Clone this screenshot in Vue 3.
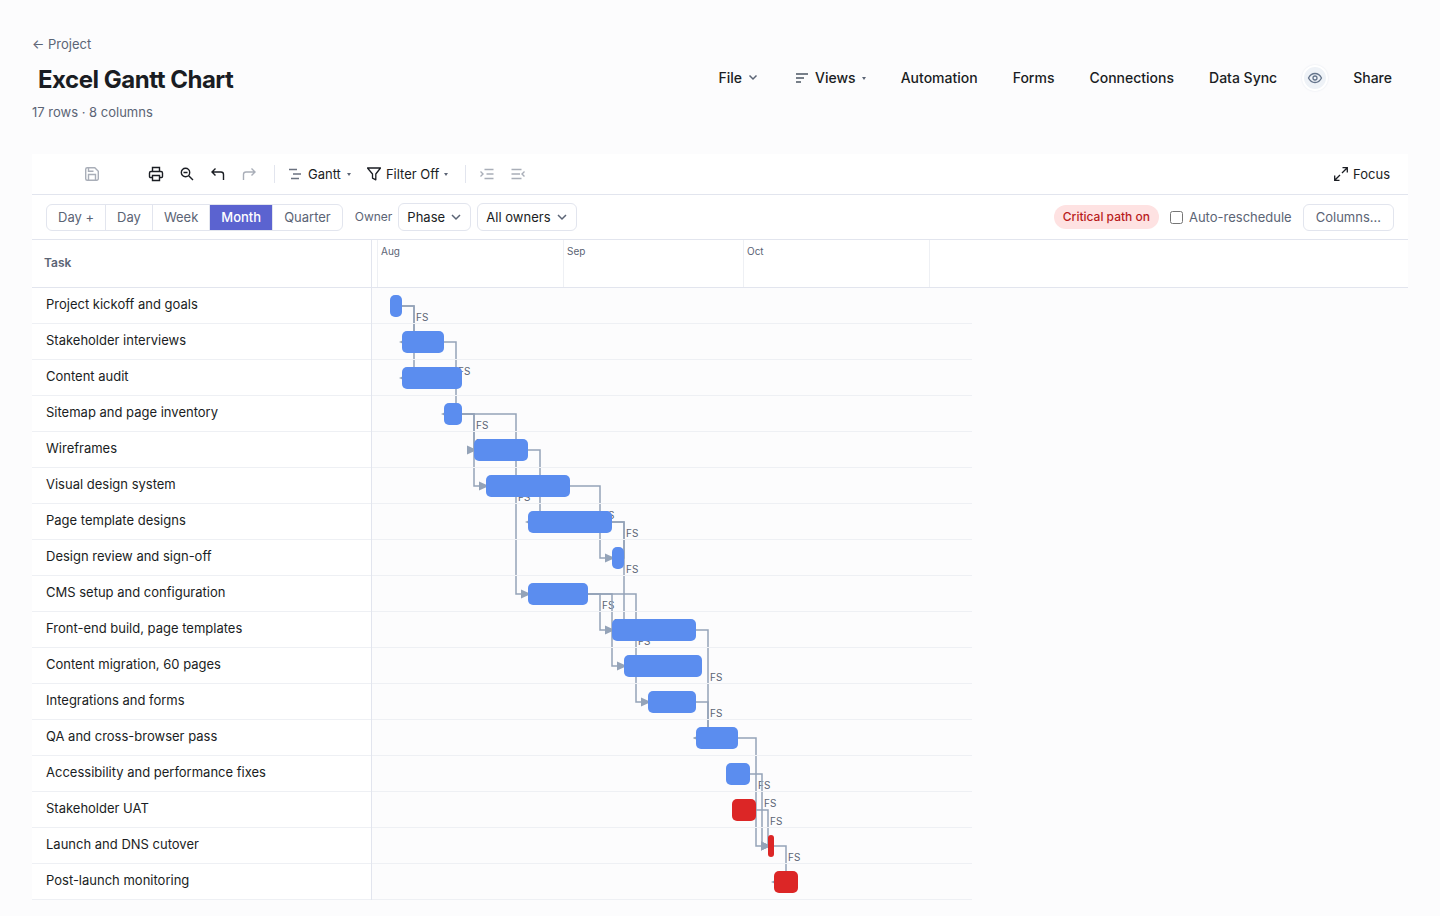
<script setup>
import { ref, computed } from 'vue'

const DAY = 6
const ROW = 36
const BAR = 22
const DAYS = 100

const months = [
  { name: 'Aug', day: 1 },
  { name: 'Sep', day: 32 },
  { name: 'Oct', day: 62 },
  { name: '', day: 93 },
]

const tasks = [
  { name: 'Project kickoff and goals', start: 3, days: 2 },
  { name: 'Stakeholder interviews', start: 5, days: 7 },
  { name: 'Content audit', start: 5, days: 10 },
  { name: 'Sitemap and page inventory', start: 12, days: 3 },
  { name: 'Wireframes', start: 17, days: 9 },
  { name: 'Visual design system', start: 19, days: 14 },
  { name: 'Page template designs', start: 26, days: 14 },
  { name: 'Design review and sign-off', start: 40, days: 2 },
  { name: 'CMS setup and configuration', start: 26, days: 10 },
  { name: 'Front-end build, page templates', start: 40, days: 14 },
  { name: 'Content migration, 60 pages', start: 42, days: 13 },
  { name: 'Integrations and forms', start: 46, days: 8 },
  { name: 'QA and cross-browser pass', start: 54, days: 7 },
  { name: 'Accessibility and performance fixes', start: 59, days: 4 },
  { name: 'Stakeholder UAT', start: 60, days: 4, critical: true },
  { name: 'Launch and DNS cutover', start: 66, days: 1, critical: true },
  { name: 'Post-launch monitoring', start: 67, days: 4, critical: true },
]

const dependencies = [
  [0, 1], [0, 2], [1, 3], [3, 4], [3, 5], [3, 8], [4, 6], [5, 7], [6, 7],
  [6, 9], [8, 9], [8, 10], [8, 11], [9, 12], [11, 12], [12, 15], [13, 15],
  [14, 15], [15, 16],
]

const chartWidth = DAYS * DAY
const chartHeight = tasks.length * ROW

const links = computed(() =>
  dependencies.map(([from, to]) => {
    const x1 = (tasks[from].start + tasks[from].days) * DAY
    const x2 = tasks[to].start * DAY
    const y1 = from * ROW + ROW / 2
    const y2 = to * ROW + ROW / 2
    const elbow = Math.max(x1 + 12, x2 - 12)
    const dir = elbow > x2 ? -1 : 1
    const base = x2 - 7
    const arrow =
      dir > 0
        ? `M${base} ${y2 - 4.5}L${x2 + 3} ${y2}L${base} ${y2 + 4.5}Z`
        : `M${x2 + 7} ${y2 - 4.5}L${x2 - 3} ${y2}L${x2 + 7} ${y2 + 4.5}Z`
    return {
      key: `${from}-${to}`,
      path: `M${x1} ${y1}H${elbow}V${y2}H${x2}`,
      arrow,
      labelX: elbow + 2,
      labelY: (y1 + y2) / 2 - 3,
    }
  })
)

const zooms = ['Day +', 'Day', 'Week', 'Month', 'Quarter']
const zoom = ref('Month')
const owner = ref('Phase')
const person = ref('All owners')
const auto = ref(false)
</script>

<template>
  <div class="page">
    <header class="head">
      <div>
        <a class="back" href="#">← Project</a>
        <h1>Excel Gantt Chart</h1>
        <p class="meta">17 rows · 8 columns</p>
      </div>
      <nav class="nav">
        <button type="button" class="file">
          File
          <svg class="chev" width="10" height="10" viewBox="0 0 10 10"><path d="M1.500 2.500l3.500 3.500L8.500 2.500" /></svg>
        </button>
        <button type="button" class="views">
          <svg width="14" height="12" viewBox="0 0 14 12"><path d="M1 2h12M1 6h8M1 10h5" fill="none" stroke="#4b5563" stroke-width="1.5" /></svg>
          Views
          <span class="caret" />
        </button>
        <button type="button">Automation</button>
        <button type="button">Forms</button>
        <button type="button">Connections</button>
        <button type="button">Data Sync</button>
        <button type="button" class="eye" aria-label="Viewers">
          <span class="disc">
            <svg width="16" height="16" viewBox="0 0 16 16" fill="none" stroke="#64748b" stroke-width="1.3"><path d="M1.500 8C3 5 5.300 3.500 8 3.500S13 5 14.500 8C13 11 10.700 12.500 8 12.500S3 11 1.500 8z" /><circle cx="8" cy="8" r="2" /></svg>
          </span>
        </button>
        <button type="button">Share</button>
      </nav>
    </header>

    <main class="panel">
      <div class="toolbar">
        <button type="button" class="icon save" aria-label="Save" disabled>
          <svg width="16" height="16" viewBox="0 0 16 16"><path d="M3.200 1.700h7.600l3.500 3.500v7.600a1.500 1.500 0 0 1-1.500 1.500H3.200a1.500 1.500 0 0 1-1.500-1.500V3.200a1.500 1.500 0 0 1 1.500-1.500zM4.500 14V8.500h7V14M4.500 2v3.200h5" /></svg>
        </button>
        <button type="button" class="icon" aria-label="Print">
          <svg width="16" height="16" viewBox="0 0 16 16"><path d="M4.500 5.500V1.500h7v4M4.500 11.500H2.500a1 1 0 0 1-1-1V7a1.500 1.500 0 0 1 1.500-1.500h10A1.500 1.500 0 0 1 14.500 7v3.500a1 1 0 0 1-1 1h-2M4.500 9.500h7v5h-7z" /></svg>
        </button>
        <button type="button" class="icon" aria-label="Zoom out">
          <svg width="16" height="16" viewBox="0 0 16 16"><circle cx="6.500" cy="6.500" r="4.200" /><path d="M9.700 9.700l4.300 4.300M4.500 6.500h4" /></svg>
        </button>
        <button type="button" class="icon" aria-label="Undo">
          <svg width="16" height="16" viewBox="0 0 16 16"><path d="M5.500 2.500L2 6l3.500 3.500M2 6h9a2.500 2.500 0 0 1 2.500 2.500V14" /></svg>
        </button>
        <button type="button" class="icon" aria-label="Redo" disabled>
          <svg width="16" height="16" viewBox="0 0 16 16"><path d="M10.500 2.500L14 6l-3.500 3.500M14 6H5a2.500 2.500 0 0 0-2.500 2.500V14" /></svg>
        </button>
        <span class="rule" />
        <button type="button" class="tool">
          <svg width="14" height="14" viewBox="0 0 14 14"><path d="M1 2.500h8M5 7h8M3 11.500h8" fill="none" stroke="#6b7280" stroke-width="1.700" /></svg>
          Gantt
          <span class="caret" />
        </button>
        <button type="button" class="tool filter">
          <svg width="14" height="16" viewBox="1 0 14 16"><path d="M1.500 2h13L9.800 8v5.800l-3.300-1.600V8z" fill="none" stroke="#1a1d23" stroke-width="1.300" stroke-linejoin="round" /></svg>
          Filter Off
          <span class="caret" />
        </button>
        <span class="rule tight" />
        <button type="button" class="icon" aria-label="Indent" disabled>
          <svg width="16" height="16" viewBox="0 0 16 16"><path d="M5.500 3.500h9M7.500 8h7M5.500 12.500h9M1.500 5.500L4 8l-2.500 2.500" /></svg>
        </button>
        <button type="button" class="icon" aria-label="Outdent" disabled>
          <svg width="16" height="16" viewBox="0 0 16 16"><path d="M1.500 3.500h10M1.500 8h8.500M1.500 12.500h10M14.500 5.500L12 8l2.500 2.500" /></svg>
        </button>
        <button type="button" class="tool focus">
          <svg width="16" height="16" viewBox="0 0 16 16" fill="none" stroke="#1a1d23" stroke-width="1.300"><path d="M9.500 1.700h4.800v4.800M14.300 1.700L9 7M6.500 14.300H1.700V9.500M1.700 14.300L7 9" /></svg>
          Focus
        </button>
      </div>

      <div class="controls">
        <div class="segments">
          <button v-for="z in zooms" :key="z" type="button" :class="{ on: z === zoom }" @click="zoom = z">{{ z }}</button>
        </div>
        <label class="owner" for="owner">Owner</label>
        <span class="pick">
          <select id="owner" v-model="owner"><option>Phase</option></select>
          <svg class="chev" width="10" height="10" viewBox="0 0 10 10"><path d="M1 3l4 4 4-4" /></svg>
        </span>
        <span class="pick">
          <select v-model="person" aria-label="Filter by owner"><option>All owners</option></select>
          <svg class="chev" width="10" height="10" viewBox="0 0 10 10"><path d="M1 3l4 4 4-4" /></svg>
        </span>
        <button type="button" class="critical">Critical path on</button>
        <label class="auto"><input v-model="auto" type="checkbox">Auto-reschedule</label>
        <button type="button" class="columns">Columns…</button>
      </div>

      <div class="gantt">
        <table class="tasks">
          <thead><tr><th scope="col">Task</th></tr></thead>
          <tbody>
            <tr v-for="t in tasks" :key="t.name"><td>{{ t.name }}</td></tr>
          </tbody>
        </table>
        <div class="timeline">
          <div class="months">
            <span v-for="m in months" :key="m.day" class="month" :style="{ left: m.day * DAY - 1 + 'px' }">{{ m.name }}</span>
          </div>
          <div class="chart" :style="{ width: chartWidth + 'px' }">
            <svg class="links" :width="chartWidth" :height="chartHeight">
              <g v-for="l in links" :key="l.key">
                <path class="link" :d="l.path" />
                <path class="arrow" :d="l.arrow" />
                <text :x="l.labelX" :y="l.labelY">FS</text>
              </g>
            </svg>
            <div v-for="t in tasks" :key="t.name" class="lane">
              <span
                class="bar"
                :class="{ red: t.critical }"
                :style="{ left: t.start * DAY + 'px', width: t.days * DAY + 'px', height: BAR + 'px' }"
              />
            </div>
          </div>
        </div>
      </div>
    </main>
  </div>
</template>

<style>
body {
  background: #fcfcfd;
}
</style>

<style scoped>
.page {
  box-sizing: border-box;
  padding: 36px 32px 16px;
  font-family: Inter, "Liberation Sans", sans-serif;
  font-size: 13px;
  line-height: 16px;
  color: #1a1d23;
}
button,
select {
  font: inherit;
  color: inherit;
  background: none;
  border: 0;
  margin: 0;
  padding: 0;
  white-space: nowrap;
}
.head {
  display: flex;
  justify-content: space-between;
  align-items: flex-start;
  margin-bottom: 35px;
}
.back {
  display: block;
  color: #5b6475;
  text-decoration: none;
}
h1 {
  margin: 12px 0 9px 6px;
  font-size: 24px;
  line-height: 32px;
  font-weight: 700;
  letter-spacing: -0.02em;
}
.meta {
  margin: 0;
  line-height: 14px;
  color: #5b6475;
}
.nav {
  display: flex;
  align-items: center;
  gap: 3px;
  margin-top: 26px;
}
.nav button {
  display: flex;
  align-items: center;
  height: 32px;
  padding: 0 16px;
  font-size: 14px;
  font-weight: 500;
}
.nav .file {
  gap: 6px;
  margin-right: 2px;
}
.nav .views {
  gap: 6px;
}
.nav .eye {
  width: 38px;
  padding: 0;
  justify-content: center;
}
.disc {
  display: flex;
  align-items: center;
  justify-content: center;
  width: 22px;
  height: 22px;
  border-radius: 50%;
  background: #eef2f7;
  border: 2px solid #fff;
  box-shadow: 0 0 2px #e2e6ee;
}
.chev {
  fill: none;
  stroke: #5b6475;
  stroke-width: 1.5;
  flex: none;
}
.caret {
  border: 2px solid transparent;
  border-top: 3px solid #5b6475;
  border-bottom: 0;
}
.panel {
  background: #fff;
}
.toolbar {
  display: flex;
  align-items: center;
  gap: 4px;
  height: 40px;
  padding: 0 14px 0 46px;
  border-bottom: 1px solid #e2e5ee;
}
.icon {
  display: flex;
  align-items: center;
  justify-content: center;
  width: 27px;
  height: 28px;
}
.icon svg {
  fill: none;
  stroke: #1a1d23;
  stroke-width: 1.4;
}
.icon:disabled svg {
  stroke: #a9aeb8;
}
.save {
  margin-right: 33px;
}
.rule {
  width: 1px;
  height: 18px;
  margin: 0 7px 0 8px;
  background: #e2e5ee;
}
.tight {
  margin-right: 3px;
}
.tool {
  display: flex;
  align-items: center;
  gap: 6px;
  height: 28px;
  padding: 0 2px;
}
.filter {
  margin-left: 8px;
  padding-right: 5px;
  gap: 5px;
}
.focus {
  margin-left: auto;
  padding: 0 4px;
  gap: 4px;
}
.controls {
  display: flex;
  align-items: center;
  height: 44px;
  padding: 0 14px;
  border-bottom: 1px solid #e2e5ee;
  color: #5b6475;
}
.segments {
  display: flex;
  border: 1px solid #e2e5ee;
  border-radius: 6px;
  overflow: hidden;
}
.segments button {
  height: 25px;
  padding: 0 11px;
}
.segments button + button {
  border-left: 1px solid #e2e5ee;
}
.segments .on {
  background: #5b63d0;
  color: #fff;
  font-weight: 500;
}
.owner {
  margin: 0 6px 0 12px;
  font-size: 12px;
}
.pick {
  display: grid;
  align-items: center;
  margin-right: 6px;
  color: #1a1d23;
}
.pick select,
.pick svg {
  grid-area: 1 / 1;
}
.pick svg {
  justify-self: end;
  margin-right: 10px;
  pointer-events: none;
}
.pick select {
  appearance: none;
  height: 28px;
  padding: 0 25px 0 8px;
  border: 1px solid #e2e5ee;
  border-radius: 6px;
  background: #fff;
}
.critical {
  margin-left: auto;
  height: 24px;
  padding: 0 9px;
  border-radius: 12px;
  background: #fee2e2;
  color: #b91c1c;
  font-size: 12px;
  font-weight: 500;
}
.auto {
  display: flex;
  align-items: center;
  gap: 6px;
  margin: 0 11px;
}
.auto input {
  width: 13px;
  height: 13px;
  margin: 0;
}
.columns {
  height: 27px;
  padding: 0 12px;
  border: 1px solid #e2e5ee;
  border-radius: 6px;
}
.gantt {
  display: flex;
}
.tasks {
  flex: none;
  width: 340px;
  border-collapse: separate;
  border-spacing: 0;
  border-right: 1px solid #e2e5ee;
}
th {
  box-sizing: border-box;
  height: 48px;
  padding: 0 12px 2px;
  border-bottom: 1px solid #e2e5ee;
  text-align: left;
  font-size: 12px;
  font-weight: 600;
  color: #5b6475;
}
td {
  box-sizing: border-box;
  height: 36px;
  padding: 0 14px 3px;
  border-bottom: 1px solid #eef0f4;
}
.timeline {
  flex: 1;
  min-width: 0;
  background: #fcfcfd;
}
.months {
  position: relative;
  box-sizing: border-box;
  height: 48px;
  background: #fff;
  border-bottom: 1px solid #e2e5ee;
}
.month {
  position: absolute;
  top: 0;
  bottom: 0;
  padding: 3px;
  border-left: 1px solid #eef0f4;
  font-size: 10px;
  color: #5b6475;
}
.chart {
  position: relative;
}
.links {
  position: absolute;
  inset: 0;
}
.link {
  fill: none;
  stroke: #94a3b8;
  stroke-width: 1.5;
}
.arrow {
  fill: #94a3b8;
}
.links text {
  font-size: 10px;
  fill: #5b6475;
}
.lane {
  position: relative;
  display: flex;
  align-items: center;
  box-sizing: border-box;
  height: 36px;
  padding-top: 1px;
  border-bottom: 1px solid #eef0f4;
}
.bar {
  position: absolute;
  border-radius: 5px;
  background: #5b8def;
}
.red {
  background: #dc2626;
}
</style>
